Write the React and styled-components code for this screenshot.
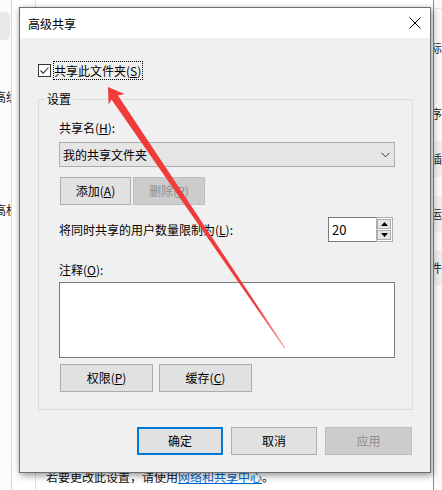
import React from 'react';
import styled, { createGlobalStyle } from 'styled-components';

const GlobalStyle = createGlobalStyle`
  html, body { margin: 0; padding: 0; background: #fff; }
  body {
    font-family: "Noto Sans CJK SC", "Microsoft YaHei", "Noto Sans", sans-serif;
    font-size: 12px;
    color: #000;
  }
  #root { width: 442px; height: 490px; }
`;

const Desktop = styled.div`
  position: relative;
  width: 442px;
  height: 490px;
  overflow: hidden;
  display: flex;
  background: #fff;
`;

/* ---------- window behind the dialog ---------- */
const LeftStrip = styled.div`
  width: 11px;
  flex: none;
  border-right: 1px solid #d9d9d9;
  overflow: hidden;
  display: flex;
  flex-direction: column;
  background: #fbfbfb;
`;
const Pill = styled.div`
  margin: 12px 0 0 -10px;
  width: 20px;
  height: 28px;
  border-radius: 5px;
  background: #e9e9e9;
`;
const ClipText = styled.div`
  white-space: nowrap;
  line-height: 16px;
  color: #222;
  margin-top: ${p => p.$top}px;
  margin-left: ${p => p.$left}px;
`;
const Center = styled.div`
  flex: 1;
  display: flex;
`;
const Gutter = styled.div`
  width: 23px;
  flex: none;
  border-right: 1px solid #e2e2e2;
`;
const BackContent = styled.div`
  flex: 1;
  padding: 469px 0 0 10px;
  white-space: nowrap;
  line-height: 16px;
  color: #111;
`;
const Link = styled.span`
  color: #0066cc;
  text-decoration: underline;
`;
const RightStrip = styled.div`
  width: 8px;
  flex: none;
  border-left: 1px solid #8a8a8a;
  overflow: hidden;
  display: flex;
  flex-direction: column;
`;
const RightRow = styled.div`
  height: ${p => p.$h}px;
  flex: none;
  background: ${p => (p.$grey ? '#eeeeee' : '#fafafa')};
  border-bottom: 1px solid ${p => (p.$line ? '#e3e3e3' : 'transparent')};
  display: flex;
  align-items: center;
  white-space: nowrap;
  line-height: 16px;
  color: #222;
  & > span { margin-left: -4px; }
`;

/* ---------- dialog ---------- */
const Dialog = styled.div`
  position: absolute;
  left: 19px;
  top: 7px;
  width: 412px;
  height: 466px;
  box-sizing: border-box;
  border: 1px solid #6f6f6f;
  display: flex;
  flex-direction: column;
  box-shadow: 2px 3px 7px rgba(0, 0, 0, 0.35), -1px 0 5px rgba(0, 0, 0, 0.12);
  background: #f0f0f0;
`;
const TitleBar = styled.div`
  height: 30px;
  flex: none;
  background: #fff;
  display: flex;
  align-items: center;
  justify-content: space-between;
  padding: 0 9px 0 8px;
`;
const Title = styled.span`
  font-size: 12px;
  line-height: 16px;
  padding-top: 1px;
`;
const Body = styled.div`
  flex: 1;
  display: flex;
  flex-direction: column;
  padding: 0 17px 16px 18px;
`;
const CheckRow = styled.div`
  margin-top: 23px;
  height: 19px;
  display: flex;
  align-items: center;
`;
const CheckBox = styled.div`
  width: 13px;
  height: 13px;
  box-sizing: border-box;
  border: 1px solid #333;
  background: #fff;
  display: flex;
  align-items: center;
  justify-content: center;
`;
const CheckLabel = styled.span`
  margin-left: 2px;
  height: 19px;
  box-sizing: border-box;
  border: 1px dotted #000;
  line-height: 17px;
  padding: 0 1px 0 0;
`;
const U = styled.span`
  text-decoration: underline;
`;
const Group = styled.fieldset`
  margin: 11px 0 0;
  padding: 13px 17px 17px 20px;
  border: 1px solid #dcdcdc;
  min-width: 0;
`;
const Legend = styled.legend`
  margin-left: -14px;
  padding: 0 2px;
  line-height: 16px;
  font-size: 12px;
`;
const FieldLabel = styled.div`
  line-height: 16px;
  margin-top: ${p => p.$top || 0}px;
`;
const Select = styled.div`
  margin-top: 6px;
  height: 25px;
  box-sizing: border-box;
  border: 1px solid #adadad;
  background: #e5e5e5;
  display: flex;
  align-items: center;
  justify-content: space-between;
  padding: 0 4px 0 3px;
  line-height: 16px;
`;
const ButtonRow = styled.div`
  display: flex;
  gap: ${p => p.$gap}px;
  margin-top: ${p => p.$top}px;
  padding-left: 1px;
`;
const Button = styled.button`
  width: ${p => p.$w}px;
  height: 28px;
  box-sizing: border-box;
  margin: 0;
  padding: 0;
  font: inherit;
  font-size: 12px;
  line-height: 16px;
  color: ${p => (p.$disabled ? '#8d8d8d' : '#000')};
  background: ${p => (p.$disabled ? '#cccccc' : '#e1e1e1')};
  border: ${p =>
    p.$primary ? '2px solid #0078d7' : p.$disabled ? '1px solid #bfbfbf' : '1px solid #adadad'};
`;
const LimitRow = styled.div`
  margin-top: 12px;
  height: 25px;
  display: flex;
  align-items: center;
  justify-content: space-between;
  line-height: 16px;
`;
const Spinner = styled.div`
  display: flex;
  height: 25px;
  margin-right: 2px;
`;
const SpinField = styled.div`
  width: 48px;
  box-sizing: border-box;
  border: 1px solid #7a7a7a;
  border-right: none;
  background: #fff;
  padding-left: 3px;
  line-height: 23px;
  font-size: 13px;
`;
const SpinBox = styled.div`
  width: 17px;
  box-sizing: border-box;
  border: 1px solid #adadad;
  background: #fff;
  padding: 1px 1px 1px 0;
  display: flex;
  flex-direction: column;
  gap: 1px;
`;
const SpinBtn = styled.div`
  flex: 1;
  box-sizing: border-box;
  border: 1px solid #adadad;
  background: #e5e5e5;
  display: flex;
  align-items: center;
  justify-content: center;
`;
const TextArea = styled.div`
  margin-top: 4px;
  height: 76px;
  box-sizing: border-box;
  border: 1px solid #7a7a7a;
  background: #fff;
`;
const Footer = styled.div`
  margin-top: 17px;
  display: flex;
  justify-content: flex-end;
  gap: 8px;
  padding-right: 1px;
`;
const Overlay = styled.svg`
  position: absolute;
  left: 0;
  top: 0;
  pointer-events: none;
`;

const rightRows = [
  { h: 8, line: true },
  { h: 78, text: '际的' },
  { h: 52, text: '序' },
  { h: 35, grey: true, text: '插' },
  { h: 18 },
  { h: 35, grey: true, text: '运' },
  { h: 17 },
  { h: 35, grey: true, text: '件扌' },
  { h: 200 },
];

export default function App() {
  return (
    <>
      <GlobalStyle />
      <Desktop>
        <LeftStrip>
          <Pill />
          <ClipText $top={49} $left={-6}>高级</ClipText>
          <ClipText $top={97} $left={-6}>高权</ClipText>
        </LeftStrip>
        <Center>
          <Gutter />
          <BackContent>
            若要更改此设置，请使用<Link>网络和共享中心</Link>。
          </BackContent>
        </Center>
        <RightStrip>
          {rightRows.map((r, i) => (
            <RightRow key={i} $h={r.h} $grey={r.grey} $line={r.line}>
              {r.text && <span>{r.text}</span>}
            </RightRow>
          ))}
        </RightStrip>

        <Dialog>
          <TitleBar>
            <Title>高级共享</Title>
            <svg width="12" height="12" viewBox="0 0 12 12">
              <path d="M0.5 0.5 L11.5 11.5 M11.5 0.5 L0.5 11.5" stroke="#000" strokeWidth="1" />
            </svg>
          </TitleBar>
          <Body>
            <CheckRow>
              <CheckBox>
                <svg width="11" height="11" viewBox="0 0 11 11">
                  <path d="M1.5 5.5 L4.2 8.2 L9.5 2.5" fill="none" stroke="#333" strokeWidth="1.1" />
                </svg>
              </CheckBox>
              <CheckLabel>
                共享此文件夹(<U>S</U>)
              </CheckLabel>
            </CheckRow>

            <Group>
              <Legend>设置</Legend>
              <FieldLabel>
                共享名(<U>H</U>):
              </FieldLabel>
              <Select>
                <span>我的共享文件夹</span>
                <svg width="9" height="6" viewBox="0 0 9 6">
                  <path d="M0.5 0.8 L4.5 4.8 L8.5 0.8" fill="none" stroke="#333" strokeWidth="1" />
                </svg>
              </Select>
              <ButtonRow $gap={2} $top={10}>
                <Button $w={71}>
                  添加(<U>A</U>)
                </Button>
                <Button $w={72} $disabled>
                  删除(<U>R</U>)
                </Button>
              </ButtonRow>
              <LimitRow>
                <span>
                  将同时共享的用户数量限制为(<U>L</U>):
                </span>
                <Spinner>
                  <SpinField>20</SpinField>
                  <SpinBox>
                    <SpinBtn>
                      <svg width="7" height="4" viewBox="0 0 7 4">
                        <path d="M0 4 L3.5 0 L7 4 Z" fill="#000" />
                      </svg>
                    </SpinBtn>
                    <SpinBtn>
                      <svg width="7" height="4" viewBox="0 0 7 4">
                        <path d="M0 0 L3.5 4 L7 0 Z" fill="#000" />
                      </svg>
                    </SpinBtn>
                  </SpinBox>
                </Spinner>
              </LimitRow>
              <FieldLabel $top={20}>
                注释(<U>O</U>):
              </FieldLabel>
              <TextArea />
              <ButtonRow $gap={6} $top={6}>
                <Button $w={93}>
                  权限(<U>P</U>)
                </Button>
                <Button $w={93}>
                  缓存(<U>C</U>)
                </Button>
              </ButtonRow>
            </Group>

            <Footer>
              <Button $w={86} $primary>确定</Button>
              <Button $w={86}>取消</Button>
              <Button $w={87} $disabled>应用</Button>
            </Footer>
          </Body>
        </Dialog>

        <Overlay width="442" height="490" viewBox="0 0 442 490">
          <defs>
            <linearGradient id="arrowFade" x1="108" y1="87" x2="285" y2="348" gradientUnits="userSpaceOnUse">
              <stop offset="0" stopColor="#f03b3b" />
              <stop offset="0.85" stopColor="#f03b3b" />
              <stop offset="1" stopColor="#f6a0a0" />
            </linearGradient>
          </defs>
          <polygon
            points="108,87 124.5,94 118,95.5 285.2,347.6 284.3,348.3 111.5,99.5 108.6,104.6"
            fill="url(#arrowFade)"
          />
        </Overlay>
      </Desktop>
    </>
  );
}
